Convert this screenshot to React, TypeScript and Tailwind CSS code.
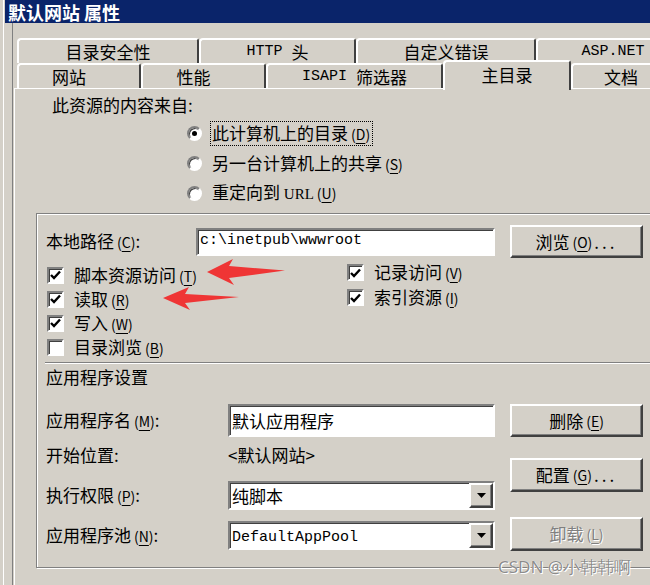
import React from "react";

const sunken =
  "border-2 border-t-[#808080] border-l-[#808080] border-b-white border-r-white shadow-[inset_1px_1px_0_#404040] bg-white";
const raised =
  "border-2 border-t-white border-l-white border-b-[#404040] border-r-[#404040] shadow-[inset_-1px_-1px_0_#808080] bg-[#d4d0c8]";
const mono = "font-['Liberation_Mono',monospace] text-[15px]";

function Acc({ k }: { k: string }) {
  return (
    <span className="ml-[3px] text-[14px]">
      (<span className="underline underline-offset-[3px]">{k}</span>)
    </span>
  );
}

function Tab({ children, className }: { children: React.ReactNode; className: string }) {
  return (
    <div
      className={
        "flex shrink-0 items-center justify-center rounded-tl-[4px] rounded-tr-[3px] border-t-2 border-l-2 border-r-2 border-t-white border-l-white border-r-[#404040] bg-[#d4d0c8] leading-[20px] " +
        className
      }
    >
      {children}
    </div>
  );
}

function Radio({ on }: { on?: boolean }) {
  return (
    <span className="flex h-[15px] w-[15px] shrink-0 items-center justify-center rounded-full border-2 border-t-[#808080] border-l-[#808080] border-b-white border-r-white bg-white shadow-[inset_1px_1px_0_#404040]">
      {on && <span className="h-[5px] w-[5px] rounded-full bg-black" />}
    </span>
  );
}

function Check({ on }: { on?: boolean }) {
  return (
    <span className={"flex h-[17px] w-[17px] shrink-0 items-center justify-center " + sunken}>
      {on && (
        <svg width="11" height="10" viewBox="0 0 11 10">
          <path d="M1 5 L4 8 L10 1.5" fill="none" stroke="black" strokeWidth="2.4" />
        </svg>
      )}
    </span>
  );
}

function Select({ children }: { children: React.ReactNode }) {
  return (
    <div className={"flex h-[29px] w-[267px] items-center " + sunken}>
      <div className="flex-1 pl-[2px] leading-[20px]">{children}</div>
      <div className={"flex h-full w-[24px] items-center justify-center " + raised}>
        <svg width="9" height="5" viewBox="0 0 9 5">
          <path d="M0 0h9L4.5 5z" fill="black" />
        </svg>
      </div>
    </div>
  );
}

function Button({ children, className, disabled }: { children: React.ReactNode; className: string; disabled?: boolean }) {
  return (
    <div
      className={
        "flex w-[133px] items-center justify-center leading-[20px] " +
        raised +
        " " +
        (disabled ? "text-[#808080] [text-shadow:1px_1px_0_#fff] " : "") +
        className
      }
    >
      {children}
    </div>
  );
}

export default function App() {
  return (
    <div className="relative h-[585px] w-[650px] overflow-hidden bg-[#d4d0c8] pl-[3px] font-['Noto_Sans_CJK_SC','Noto_Sans',sans-serif] text-[17px] text-black">
      <div className="h-full border-l border-white">
        <div className="ml-px flex h-[23px] items-center bg-[#0a246a] pl-[3px] text-white">
          <span className="text-[18px] font-bold leading-[20px]">默认网站 属性</span>
        </div>
        <div className="pl-[8px]">
          <div className="border-l border-[#808080] pl-px">
            <div className="pt-[15px]">
              {/* tabs, back row */}
              <div className="flex h-[25px] pl-[3px]">
                <Tab className="w-[182px]">目录安全性</Tab>
                <Tab className="w-[157px]">
                  <span className={mono}>HTTP</span>
                  <span className="ml-[9px]">头</span>
                </Tab>
                <Tab className="w-[180px]">自定义错误</Tab>
                <Tab className="w-[154px]">
                  <span className={mono}>ASP.NET</span>
                </Tab>
              </div>
              {/* tabs, front row */}
              <div className="flex h-[25px] items-start pl-[3px]">
                <Tab className="h-[25px] w-[124px] pr-[20px]">网站</Tab>
                <Tab className="h-[25px] w-[125px] pr-[20px]">性能</Tab>
                <Tab className="h-[25px] w-[177px]">
                  <span className={mono}>ISAPI</span>
                  <span className="ml-[9px]">筛选器</span>
                </Tab>
                <Tab className="relative z-10 -mt-[3px] h-[30px] w-[128px] pb-[3px]">主目录</Tab>
                <Tab className="h-[25px] w-[100px]">文档</Tab>
              </div>

              {/* page */}
              <div className="h-[497px] border-l border-t border-white">
                <div className="ml-[37px] mt-[6px] h-[20px] leading-[20px]">此资源的内容来自:</div>
                <div className="ml-[172px] mt-[3px]">
                  <div className="flex h-[30px] items-center">
                    <Radio on />
                    <span className="ml-[8px] border border-dotted border-black pl-px pr-[2px] leading-[22px]">
                      此计算机上的目录<Acc k="D" />
                    </span>
                  </div>
                  <div className="flex h-[30px] items-center">
                    <Radio />
                    <span className="ml-[10px] leading-[20px]">
                      另一台计算机上的共享<Acc k="S" />
                    </span>
                  </div>
                  <div className="flex h-[30px] items-center">
                    <Radio />
                    <span className="ml-[10px] leading-[20px]">
                      重定向到 <span className="font-['Liberation_Serif',serif] text-[15px]">URL</span>
                      <Acc k="U" />
                    </span>
                  </div>
                </div>

                {/* group box */}
                <div className="ml-[21px] mt-[5px] w-[640px] border border-[#808080] shadow-[inset_1px_1px_0_#fff,1px_1px_0_#fff]">
                  <div className="mt-[11px] flex h-[33px] items-center">
                    <div className="w-[159px] pl-[9px] leading-[20px]">
                      本地路径<Acc k="C" />:
                    </div>
                    <div className={"flex h-[28px] w-[299px] items-center pl-[2px] " + sunken}>
                      <span className={mono}>c:\inetpub\wwwroot</span>
                    </div>
                    <Button className="ml-[15px] h-[33px]">
                      浏览<Acc k="O" />
                      <span className="ml-[2px] tracking-[3px]">...</span>
                    </Button>
                  </div>

                  <div className="flex">
                    <div className="w-[310px] pl-[10px] pt-[5px]">
                      {[
                        ["脚本资源访问", "T", true],
                        ["读取", "R", true],
                        ["写入", "W", true],
                        ["目录浏览", "B", false],
                      ].map(([t, k, on]) => (
                        <div key={t as string} className="flex h-[24px] items-center">
                          <Check on={on as boolean} />
                          <span className="ml-[10px] leading-[20px]">
                            {t as string}
                            <Acc k={k as string} />
                          </span>
                        </div>
                      ))}
                    </div>
                    <div className="pt-[2px]">
                      {[
                        ["记录访问", "V"],
                        ["索引资源", "I"],
                      ].map(([t, k]) => (
                        <div key={t} className="flex h-[25px] items-center">
                          <Check on />
                          <span className="ml-[10px] leading-[20px]">
                            {t}
                            <Acc k={k} />
                          </span>
                        </div>
                      ))}
                    </div>
                  </div>

                  <div className="ml-[8px] mt-[3px] border-t border-[#808080] shadow-[0_1px_0_#fff]" />
                  <div className="mt-[4px] h-[20px] pl-[9px] leading-[20px]">应用程序设置</div>

                  <div className="flex pb-[16px]">
                    <div className="w-[458px] pt-[17px]">
                      <div className="flex h-[33px] items-center">
                        <div className="w-[191px] pl-[9px] leading-[20px]">
                          应用程序名<Acc k="M" />:
                        </div>
                        <div className={"flex h-[33px] w-[267px] items-center pl-[2px] leading-[20px] " + sunken}>
                          默认应用程序
                        </div>
                      </div>
                      <div className="mt-[8px] flex h-[20px] items-center leading-[20px]">
                        <div className="w-[191px] pl-[9px]">开始位置:</div>
                        <div>&lt;默认网站&gt;</div>
                      </div>
                      <div className="mt-[16px] flex h-[29px] items-center">
                        <div className="w-[191px] pl-[9px] leading-[20px]">
                          执行权限<Acc k="P" />:
                        </div>
                        <Select>纯脚本</Select>
                      </div>
                      <div className="mt-[11px] flex h-[29px] items-center">
                        <div className="w-[191px] pl-[9px] leading-[20px]">
                          应用程序池<Acc k="N" />:
                        </div>
                        <Select>
                          <span className={mono}>DefaultAppPool</span>
                        </Select>
                      </div>
                    </div>
                    <div className="ml-[15px] flex flex-col pt-[17px]">
                      <Button className="h-[33px]">
                        删除<Acc k="E" />
                      </Button>
                      <Button className="mt-[21px] h-[34px]">
                        配置<Acc k="G" />
                        <span className="ml-[2px] tracking-[3px]">...</span>
                      </Button>
                      <Button className="mt-[25px] h-[34px]" disabled>
                        卸载<Acc k="L" />
                      </Button>
                    </div>
                  </div>
                </div>
              </div>
            </div>
          </div>
        </div>
      </div>

      {/* annotation arrows */}
      <svg className="pointer-events-none absolute left-0 top-0" width="650" height="585">
        <polygon points="207,272 233,259 229,266 285,270.5 229,278 234,285" fill="#ef3535" />
        <polygon points="163,298 189,287 185,294 239,297 185,303 190,310" fill="#ef3535" />
      </svg>

      <div className="pointer-events-none absolute left-[498px] top-[556px] font-['Noto_Sans',sans-serif] text-[17px] leading-[22px] text-[rgba(120,120,120,0.85)] [text-shadow:0_0_1px_#fff,1px_1px_0_#fff]">
        CSDN @小韩韩啊
      </div>
    </div>
  );
}
